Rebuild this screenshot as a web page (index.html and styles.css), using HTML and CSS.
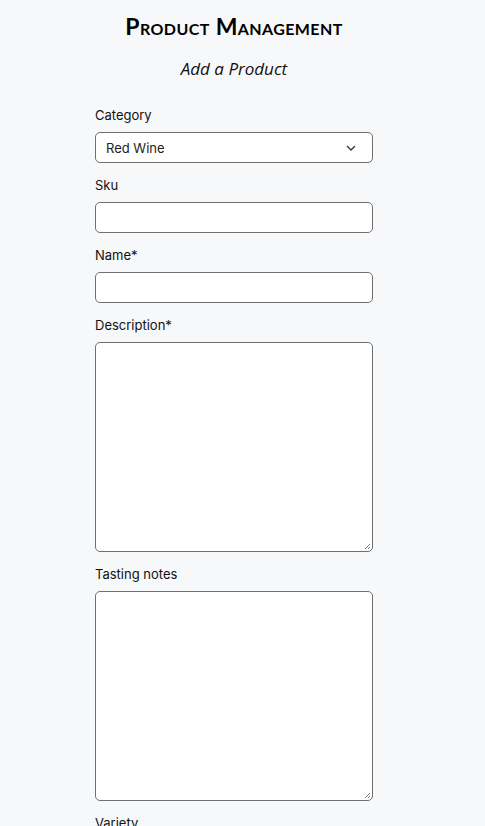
FILE: index.html
```html
<!DOCTYPE html>
<html>
<head>
<meta charset="utf-8">
<link rel="stylesheet" href="styles.css">
</head>
<body>
<main class="page">
  <h1 class="title">Product Management</h1>
  <h2 class="subtitle">Add a Product</h2>
  <form class="form">
    <div class="group">
      <label class="label">Category</label>
      <div class="select">
        <span>Red Wine</span>
        <svg class="chev" width="10" height="6" viewBox="0 0 10 6"><path d="M1 1 L5 5 L9 1" fill="none" stroke="#333" stroke-width="1.3"/></svg>
      </div>
    </div>
    <div class="group">
      <label class="label">Sku</label>
      <div class="input"></div>
    </div>
    <div class="group">
      <label class="label">Name*</label>
      <div class="input"></div>
    </div>
    <div class="group">
      <label class="label">Description*</label>
      <div class="input area">
        <svg class="grip" width="8" height="8" viewBox="0 0 8 8"><path d="M7 2 L2 7 M7 5 L5 7" stroke="#777" stroke-width="1"/></svg>
      </div>
    </div>
    <div class="group">
      <label class="label">Tasting notes</label>
      <div class="input area">
        <svg class="grip" width="8" height="8" viewBox="0 0 8 8"><path d="M7 2 L2 7 M7 5 L5 7" stroke="#777" stroke-width="1"/></svg>
      </div>
    </div>
    <div class="group">
      <label class="label">Variety</label>
      <div class="input"></div>
    </div>
  </form>
</main>
</body>
</html>
```
FILE: styles.css
```css
html, body {
  margin: 0;
  padding: 0;
  background: #f7f8fa;
  overflow: hidden;
}
.page {
  width: 468px;
  display: flex;
  flex-direction: column;
  align-items: center;
  font-family: Inter, "Noto Sans", sans-serif;
  color: #111;
}
.title {
  margin: 12px 0 0;
  font-family: Lato, sans-serif;
  font-variant: small-caps;
  font-weight: 700;
  font-size: 23px;
  line-height: 28px;
  letter-spacing: 0.4px;
  color: #000;
}
.subtitle {
  margin: 18px 0 0;
  font-family: "Open Sans", sans-serif;
  font-style: italic;
  font-weight: 400;
  font-size: 17px;
  line-height: 22px;
  color: #111;
}
.form {
  width: 278px;
  margin-top: 25px;
  display: flex;
  flex-direction: column;
  gap: 12px;
}
.group {
  display: flex;
  flex-direction: column;
  gap: 7px;
}
.label {
  font-size: 13px;
  line-height: 20px;
  color: #111;
}
.select, .input {
  box-sizing: border-box;
  height: 31px;
  border: 1px solid #6f6f6f;
  border-radius: 5px;
  background: #fff;
  position: relative;
}
.select {
  display: flex;
  align-items: center;
  justify-content: space-between;
  padding: 0 16px 0 10px;
  font-size: 13px;
  color: #222;
}
.area {
  height: 210px;
}
.grip {
  position: absolute;
  right: 1px;
  bottom: 1px;
}
```
